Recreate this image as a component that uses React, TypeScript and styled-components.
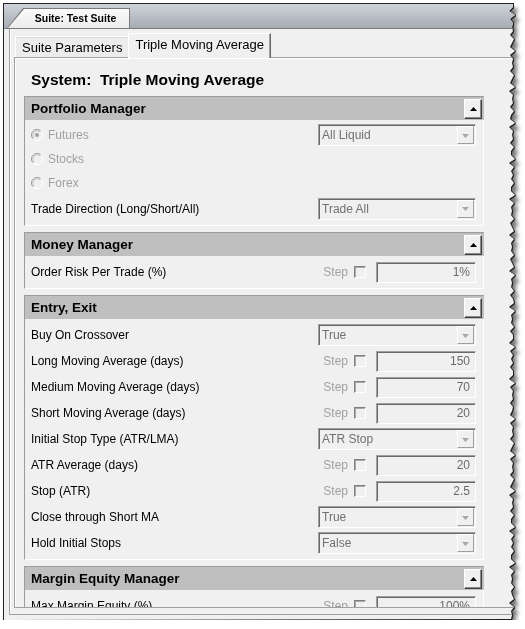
import React from 'react';
import styled, { createGlobalStyle } from 'styled-components';

type Row =
	| { kind: 'radio'; label: string; checked?: boolean; select?: string }
	| { kind: 'select'; label: string; value: string }
	| { kind: 'step'; label: string; value: string };

type Section = { title: string; rows: Row[] };

const sections: Section[] = [
	{
		title: 'Portfolio Manager',
		rows: [
			{ kind: 'radio', label: 'Futures', checked: true, select: 'All Liquid' },
			{ kind: 'radio', label: 'Stocks' },
			{ kind: 'radio', label: 'Forex' },
			{ kind: 'select', label: 'Trade Direction (Long/Short/All)', value: 'Trade All' },
		],
	},
	{
		title: 'Money Manager',
		rows: [{ kind: 'step', label: 'Order Risk Per Trade (%)', value: '1%' }],
	},
	{
		title: 'Entry, Exit',
		rows: [
			{ kind: 'select', label: 'Buy On Crossover', value: 'True' },
			{ kind: 'step', label: 'Long Moving Average (days)', value: '150' },
			{ kind: 'step', label: 'Medium Moving Average (days)', value: '70' },
			{ kind: 'step', label: 'Short Moving Average (days)', value: '20' },
			{ kind: 'select', label: 'Initial Stop Type (ATR/LMA)', value: 'ATR Stop' },
			{ kind: 'step', label: 'ATR Average (days)', value: '20' },
			{ kind: 'step', label: 'Stop (ATR)', value: '2.5' },
			{ kind: 'select', label: 'Close through Short MA', value: 'True' },
			{ kind: 'select', label: 'Hold Initial Stops', value: 'False' },
		],
	},
	{
		title: 'Margin Equity Manager',
		rows: [{ kind: 'step', label: 'Max Margin Equity (%)', value: '100%' }],
	},
];

// torn right edge of the screenshot
const WIN_W = 514;
const WIN_H = 617;
const tornEdge = () => {
	const pts = ['0 0'];
	for (let y = 0; y <= WIN_H; y += 4) {
		const x = WIN_W - 5 + Math.round(2 * Math.sin(y * 0.7) + 1.5 * Math.sin(y * 2.1 + 1));
		pts.push(`${x}px ${y}px`);
	}
	pts.push(`0 ${WIN_H}px`);
	return `polygon(${pts.join(',')})`;
};

const Radio = ({ checked }: { checked?: boolean }) => (
	<svg width='12' height='12' viewBox='0 0 12 12'>
		<circle cx='6' cy='6' r='5.5' fill='#f0f0f0' />
		<path d='M2.1 9.9 A5.5 5.5 0 0 1 9.9 2.1' stroke='#9a9a9a' fill='none' />
		<path d='M9.9 2.1 A5.5 5.5 0 0 1 2.1 9.9' stroke='#ffffff' fill='none' />
		<path d='M2.9 9.1 A4.4 4.4 0 0 1 9.1 2.9' stroke='#c4c4c4' fill='none' />
		{checked && <circle cx='6' cy='6' r='2' fill='#a0a0a0' />}
	</svg>
);

const Select = ({ value }: { value: string }) => (
	<SelectBox>
		<span>{value}</span>
		<DropButton>
			<svg width='7' height='4' viewBox='0 0 7 4'>
				<path d='M0 0 H7 L3.5 4 Z' fill='#a8a8a8' />
			</svg>
		</DropButton>
	</SelectBox>
);

const Step = ({ value }: { value: string }) => (
	<StepGroup>
		<span>Step</span>
		<Check />
		<TextBox>{value}</TextBox>
	</StepGroup>
);

const App = () => {
	return (
		<>
			<GlobalStyle />
			<Shadow>
				<Window style={{ clipPath: tornEdge() }}>
					<TitleStrip>
						<SuiteTab>
							<SuiteTabFace>Suite: Test Suite</SuiteTabFace>
						</SuiteTab>
					</TitleStrip>
					<Frame>
						<FrameInner>
							<TabRow>
								<InnerTab>Suite Parameters</InnerTab>
								<InnerTab $active>Triple Moving Average</InnerTab>
							</TabRow>
							<Panel>
								<PanelTitle>System:&nbsp; Triple Moving Average</PanelTitle>
								{sections.map((s) => (
									<SectionBox key={s.title}>
										<SectionHeader>
											<span>{s.title}</span>
											<CollapseButton>
												<svg width='7' height='4' viewBox='0 0 7 4'>
													<path d='M0 4 L3.5 0 L7 4 Z' fill='#000' />
												</svg>
											</CollapseButton>
										</SectionHeader>
										<SectionBody>
											{s.rows.map((r) => (
												<RowLine key={r.label} $h={r.kind === 'radio' ? 24 : r.kind === 'select' && s.title === 'Portfolio Manager' ? 27 : 26}>
													{r.kind === 'radio' ? (
														<RadioLabel>
															<Radio checked={r.checked} />
															<span>{r.label}</span>
														</RadioLabel>
													) : (
														<Label>{r.label}</Label>
													)}
													{r.kind === 'radio' && r.select && <Select value={r.select} />}
													{r.kind === 'select' && <Select value={r.value} />}
													{r.kind === 'step' && <Step value={r.value} />}
												</RowLine>
											))}
										</SectionBody>
									</SectionBox>
								))}
							</Panel>
						</FrameInner>
					</Frame>
				</Window>
			</Shadow>
		</>
	);
};

const GlobalStyle = createGlobalStyle`
	* {
		box-sizing: border-box;
	}
	body {
		margin: 0;
		background: #ffffff;
		font-family: "Liberation Sans", Arial, sans-serif;
	}
`;

const Shadow = styled.div`
	width: ${WIN_W}px;
	margin: 3px 0 0 3px;
	filter: drop-shadow(1px 0 0 #1e1e1e) drop-shadow(0 1px 0 #1e1e1e) drop-shadow(3px 5px 2px rgba(0, 0, 0, 0.55));
`;

const Window = styled.div`
	width: ${WIN_W}px;
	height: ${WIN_H}px;
	display: flex;
	flex-direction: column;
	background: #f0f0f0;
	border-left: 1px solid #262626;
	border-top: 1px solid #262626;
	overflow: hidden;
`;

const TitleStrip = styled.div`
	flex: none;
	height: 24px;
	display: flex;
	align-items: flex-end;
	padding-left: 3px;
	background: linear-gradient(#cfd3d9, #a6acb4);
`;

const SuiteTab = styled.div`
	width: 123px;
	height: 20px;
	padding: 1px 1px 0 1px;
	background: #7b7b7b;
	clip-path: polygon(16px 0, 100% 0, 100% 100%, 0 100%);
`;

const SuiteTabFace = styled.div`
	height: 100%;
	display: flex;
	align-items: center;
	justify-content: center;
	padding: 0 0 1px 14px;
	background: linear-gradient(#fbfbfb, #ececec);
	clip-path: polygon(16px 0, 100% 0, 100% 100%, 0 100%);
	font-size: 10.5px;
	font-weight: bold;
	color: #000;
`;

const Frame = styled.div`
	flex: 1;
	min-height: 0;
	display: flex;
	flex-direction: column;
	border-top: 1px solid #7a7a7a;
	padding: 0 0 5px 5px;
`;

const FrameInner = styled.div`
	flex: 1;
	min-height: 0;
	display: flex;
	flex-direction: column;
	border-left: 1px solid #a0a0a0;
	border-bottom: 1px solid #a0a0a0;
	box-shadow: inset 1px 0 0 #ffffff;
	padding: 4px 0 6px 4px;
`;

const TabRow = styled.div`
	flex: none;
	height: 24px;
	display: flex;
	align-items: flex-end;
	padding-left: 1px;
	position: relative;
	z-index: 1;
`;

const InnerTab = styled.div<{ $active?: boolean }>`
	height: ${(p) => (p.$active ? 25 : 21)}px;
	margin-bottom: ${(p) => (p.$active ? -1 : 0)}px;
	padding: 0 6px ${(p) => (p.$active ? 3 : 0)}px 6px;
	display: flex;
	align-items: center;
	font-size: 13px;
	color: #000;
	background: ${(p) => (p.$active ? '#f0f0f0' : '#ececec')};
	border-top: 1px solid #ffffff;
	border-left: 1px solid #ffffff;
	border-right: ${(p) => (p.$active ? '1px solid #6a6a6a' : 'none')};
	box-shadow: ${(p) => (p.$active ? 'inset -1px 0 0 #a0a0a0' : 'inset 0 1px 0 #dcdcdc')};
`;

const Panel = styled.div`
	flex: 1;
	min-height: 0;
	overflow: hidden;
	border: 1px solid #a0a0a0;
	border-right: none;
	box-shadow: inset 1px 1px 0 #ffffff;
	padding-left: 9px;
`;

const PanelTitle = styled.div`
	padding: 12px 0 0 7px;
	margin-bottom: 6px;
	line-height: 20px;
	font-size: 15.5px;
	font-weight: bold;
	color: #000;
`;

const SectionBox = styled.section`
	width: 460px;
	margin-bottom: 6px;
`;

const SectionHeader = styled.div`
	height: 24px;
	display: flex;
	align-items: center;
	justify-content: space-between;
	padding: 0 2px 0 6px;
	background: #bfbfbf;
	border-top: 1px solid #9c9c9c;
	border-left: 1px solid #9c9c9c;
	font-size: 13.5px;
	font-weight: bold;
	color: #000;
`;

const CollapseButton = styled.div`
	width: 18px;
	height: 20px;
	display: flex;
	align-items: center;
	justify-content: center;
	background: #f0f0f0;
	border: 1px solid;
	border-color: #ffffff #404040 #404040 #ffffff;
	box-shadow: inset -1px -1px 0 #8a8a8a;
`;

const SectionBody = styled.div`
	padding: 3px 7px 3px 6px;
	border-left: 1px solid #9c9c9c;
	border-right: 1px solid #ffffff;
	border-bottom: 1px solid #ffffff;
`;

const RowLine = styled.div<{ $h: number }>`
	height: ${(p) => p.$h}px;
	display: flex;
	align-items: center;
	justify-content: space-between;
	font-size: 12px;
`;

const Label = styled.span`
	color: #000;
`;

const RadioLabel = styled.span`
	display: flex;
	align-items: center;
	gap: 5px;
	color: #a0a0a0;

	svg {
		flex: none;
	}
`;

const SelectBox = styled.div`
	width: 158px;
	height: 22px;
	display: flex;
	align-items: center;
	padding-left: 3px;
	border: 1px solid;
	border-color: #a0a0a0 #ffffff #ffffff #a0a0a0;
	box-shadow: inset 1px 1px 0 #696969;
	color: #707070;
	font-size: 12px;
`;

const DropButton = styled.div`
	margin-left: auto;
	margin-right: 1px;
	width: 17px;
	height: 18px;
	display: flex;
	align-items: center;
	justify-content: center;
	padding-top: 1px;
	background: #f0f0f0;
	border: 1px solid;
	border-color: #ffffff #a0a0a0 #a0a0a0 #ffffff;
`;

const StepGroup = styled.div`
	display: flex;
	align-items: center;
	color: #a0a0a0;
	font-size: 12px;
`;

const Check = styled.span`
	width: 12px;
	height: 12px;
	margin: 0 10px 0 6px;
	border: 1px solid;
	border-color: #808080 #ffffff #ffffff #808080;
	box-shadow: inset 1px 1px 0 #a8a8a8;
`;

const TextBox = styled.div`
	width: 100px;
	height: 21px;
	display: flex;
	align-items: center;
	justify-content: flex-end;
	padding-right: 5px;
	border: 1px solid;
	border-color: #a0a0a0 #ffffff #ffffff #a0a0a0;
	box-shadow: inset 1px 1px 0 #696969;
	color: #6a6a6a;
`;

export default App;
